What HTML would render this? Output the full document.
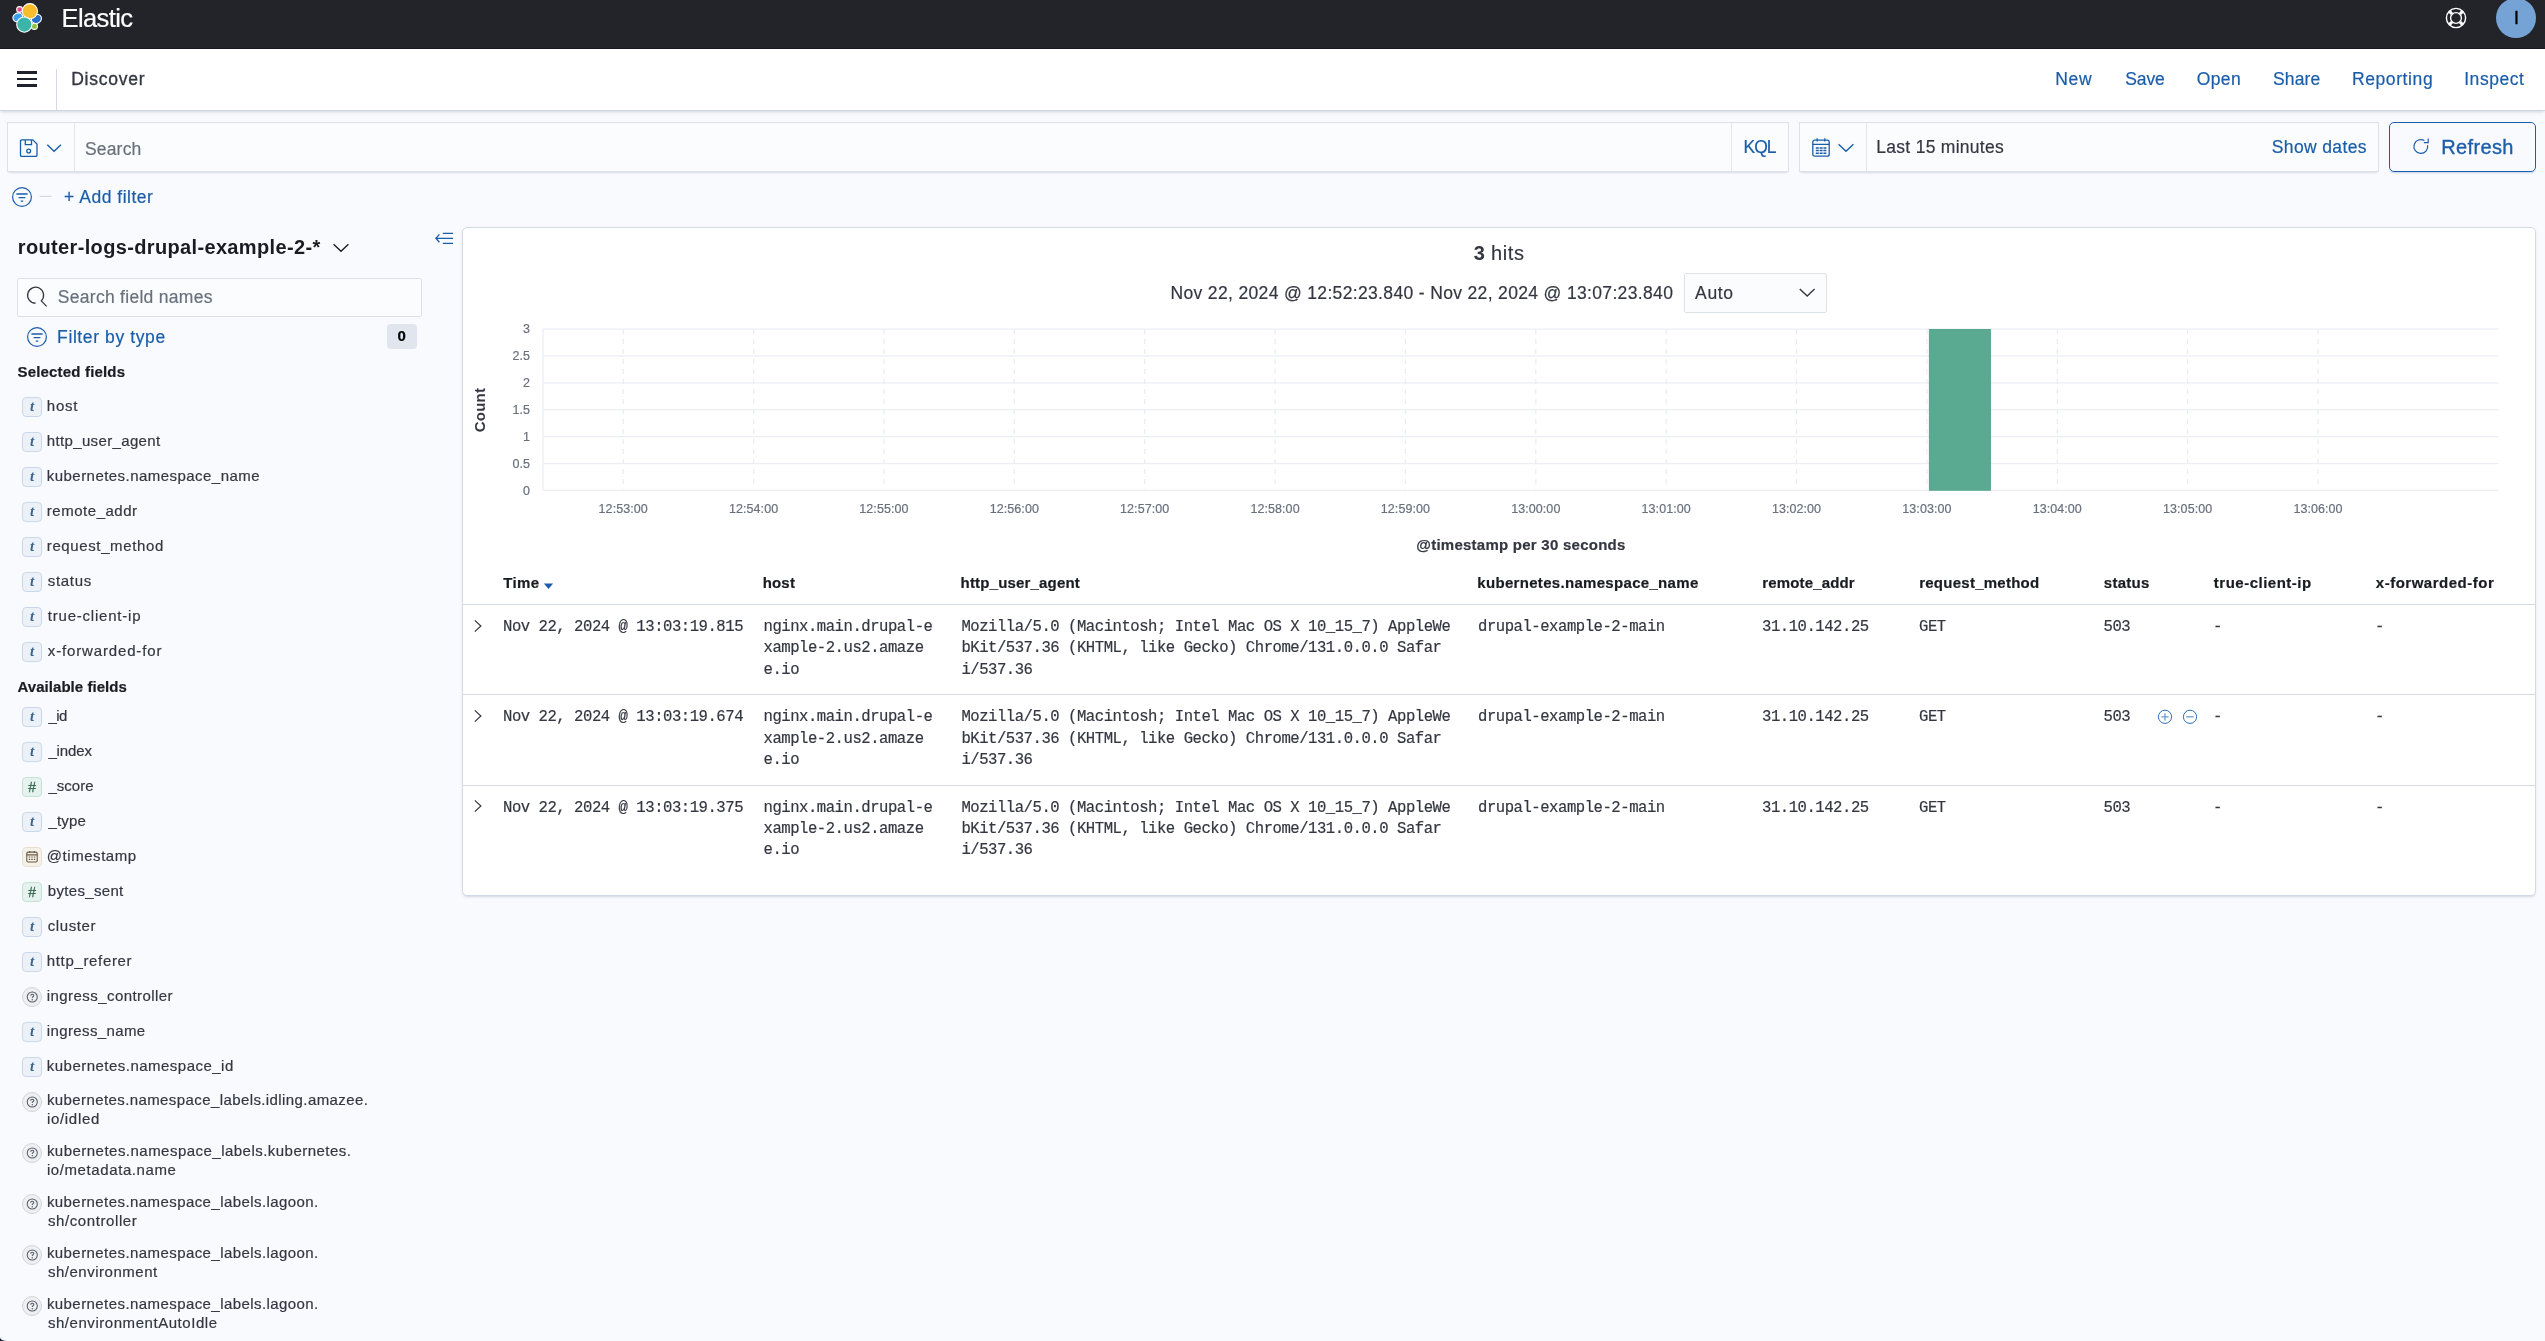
<!DOCTYPE html>
<html lang="en"><head><meta charset="utf-8"><title>Discover - Elastic</title>
<style>
*{box-sizing:border-box}
html,body{margin:0;padding:0}
body{width:2545px;height:1341px;overflow:hidden;background:#f9fafd;will-change:transform;font-family:"Liberation Sans", sans-serif;color:#343741;position:relative}
.abs{position:absolute}
.t{position:absolute;white-space:pre;line-height:1;font-family:"Liberation Sans", sans-serif;-webkit-text-stroke:.2px}
header,nav,aside,main,section{position:absolute;left:0;top:0;width:0;height:0}
.topbar{position:absolute;left:0;top:0;width:2545px;height:49px;background:#23242a;border-bottom:1px solid #18191e}
.navbar{position:absolute;left:0;top:49px;width:2545px;height:62px;background:#fff;border-bottom:1px solid #cdd4e3;box-shadow:0 2px 3px -1px rgba(152,162,179,.4)}
.box{position:absolute;background:#fbfcfd;border:1px solid #dde2ea;box-shadow:0 1px 1px -1px rgba(152,162,179,.3),0 3px 2px -2px rgba(152,162,179,.3)}
.vr{position:absolute;width:1px;background:#e3e7ee}
.tk{position:absolute;width:20px;height:20px;border-radius:4px;border:1px solid;display:flex;align-items:center;justify-content:center}
.tk i{font:italic 700 15px/1 "Liberation Serif", serif;display:block;margin-top:-1px}
.tk-t{background:#ecf1f8;border-color:#c9d8ea;color:#3b6491}
.tk-n{background:#e6f2ee;border-color:#c5e3d8;color:#3c6e58}
.tk-n i{font:italic 400 14px/1 "Liberation Sans", sans-serif;margin-top:0;-webkit-text-stroke:.35px}
.tk-d{background:#f5f1e9;border-color:#e9e1d0}
.tk-u{background:#eeeff1;border-color:#d0d3d9;border-radius:50%}
.row{position:absolute;left:0;width:0;height:0}
.c{position:absolute;top:0;white-space:pre;font:15.6px/21.4px "Liberation Mono", monospace;letter-spacing:-.468px;color:#343741;-webkit-text-stroke:.2px}
</style></head>
<body>

<header>
<div class="topbar"></div>
<svg class="abs" style="left:10px;top:0" width="36" height="36" viewBox="0 0 36 36">
<g stroke="#fff" stroke-width="1.1">
<circle cx="9.6" cy="9.5" r="2.9" fill="#e5478b"/>
<ellipse cx="7.8" cy="17.4" rx="5" ry="4.4" fill="#3a9ff0" transform="rotate(-25 7.8 17.4)"/>
<ellipse cx="26.4" cy="18.9" rx="5.2" ry="4.4" fill="#2470c8" transform="rotate(-25 26.4 18.9)"/>
<circle cx="24.4" cy="26.3" r="3.1" fill="#8fc43f"/>
<circle cx="19.9" cy="11.2" r="7.6" fill="#f8bd2a"/>
<circle cx="14.3" cy="24.6" r="7.6" fill="#3ab5a8"/>
</g></svg>
<svg class="abs" style="left:2444px;top:6px" width="24" height="24" viewBox="0 0 24 24">
<g fill="none" stroke="#fff">
<circle cx="12" cy="12" r="9.6" stroke-width="1.4"/>
<circle cx="12" cy="12" r="5.4" stroke-width="1.4"/>
<path d="M8 8 5.4 5.4M16 8l2.6-2.6M8 16l-2.6 2.6M16 16l2.6 2.6" stroke-width="3.1"/>
</g></svg>
<div class="abs" style="left:2496px;top:-2px;width:40px;height:40px;border-radius:50%;background:#76a3d6"></div>
<span class="t" style="left:61.60px;top:5.90px;font-size:25.5px;color:#fff;letter-spacing:-0.609px;">Elastic</span>
<span class="t" style="left:2513.90px;top:9.80px;font-size:17.5px;color:#000;-webkit-text-stroke:.4px #000;">I</span>
</header>
<nav>
<div class="navbar"></div>
<div class="abs" style="left:17px;top:71.3px;width:20.2px;height:2.6px;background:#1f212b"></div>
<div class="abs" style="left:17px;top:77.9px;width:20.2px;height:2.6px;background:#1f212b"></div>
<div class="abs" style="left:17px;top:84.1px;width:20.2px;height:2.6px;background:#1f212b"></div>
<div class="abs" style="left:56px;top:69px;width:1.2px;height:41px;background:#d3dae6"></div>
<span class="t" style="left:71.20px;top:70.90px;font-size:17.5px;letter-spacing:0.766px;-webkit-text-stroke:.35px #343741;">Discover</span>
<span class="t" style="left:2055.30px;top:71.20px;font-size:17.5px;color:#1a5daa;letter-spacing:0.665px;">New</span>
<span class="t" style="left:2125.30px;top:71.20px;font-size:17.5px;color:#1a5daa;letter-spacing:-0.152px;">Save</span>
<span class="t" style="left:2196.70px;top:71.20px;font-size:17.5px;color:#1a5daa;letter-spacing:0.408px;">Open</span>
<span class="t" style="left:2273.10px;top:71.20px;font-size:17.5px;color:#1a5daa;letter-spacing:0.084px;">Share</span>
<span class="t" style="left:2351.90px;top:71.20px;font-size:17.5px;color:#1a5daa;letter-spacing:0.607px;">Reporting</span>
<span class="t" style="left:2464.20px;top:71.20px;font-size:17.5px;color:#1a5daa;letter-spacing:0.557px;">Inspect</span>
</nav>
<section>
<div class="box" style="left:7px;top:122px;width:1782px;height:50px"></div>
<div class="vr" style="left:74px;top:123px;height:48px"></div>
<div class="vr" style="left:1730.5px;top:123px;height:48px"></div>
<svg class="abs" style="left:19px;top:138px" width="44" height="20" viewBox="0 0 44 20">
<g fill="none" stroke="#1a5daa" stroke-width="1.3">
<path d="M2.6 1.9h11.2l4.2 4.2v11.2a1.1 1.1 0 0 1-1.1 1.1H2.6a1.1 1.1 0 0 1-1.1-1.1V3a1.1 1.1 0 0 1 1.1-1.1z"/>
<path d="M6.3 1.9v4.7h6.2V1.9"/>
<circle cx="9.7" cy="13" r="1.9"/>
<path d="M28.3 6.7l6.8 6.6 6.8-6.6" stroke-width="1.4"/>
</g></svg>
<div class="box" style="left:1799px;top:122px;width:580px;height:50px"></div>
<div class="vr" style="left:1866px;top:123px;height:48px"></div>
<svg class="abs" style="left:1811px;top:137px" width="46" height="22" viewBox="0 0 46 22">
<g fill="none" stroke="#1a5daa" stroke-width="1.3">
<rect x="1.8" y="3.2" width="16.4" height="16" rx="2"/>
<path d="M1.8 7.4h16.4M6.2 1.2v3.4M13.8 1.2v3.4"/>
<path d="M4.8 11h3M8.6 11h3M12.4 11h3M4.8 13.6h3M8.6 13.6h3M12.4 13.6h3M4.8 16.2h3M8.6 16.2h3M12.4 16.2h3" stroke-width="1.5"/>
<path d="M27.6 7.2l7.4 7 7.4-7" stroke-width="1.4"/>
</g></svg>
<div class="abs" style="left:2389px;top:122px;width:147.4px;height:50px;border:1.2px solid #1a5daa;border-radius:5px;box-shadow:0 2px 2px -1px rgba(26,93,170,.25)"></div>
<svg class="abs" style="left:2411px;top:136px" width="20" height="20" viewBox="0 0 20 20">
<g fill="none" stroke="#1a5daa" stroke-width="1.2">
<path d="M16.6 9.2a6.9 6.9 0 1 1-3.2-4.6"/>
<path d="M17.2 2.4v4.2h-4.4"/>
</g></svg>
<svg class="abs" style="left:11px;top:186px" width="42" height="22" viewBox="0 0 42 22">
<g fill="none" stroke="#1a5daa" stroke-width="1.2">
<circle cx="11" cy="11" r="9.4"/>
<path d="M5.4 8h11.2M7.6 11.6h6.8M9.8 15.2h2.4" stroke-width="1.3"/>
</g>
<path d="M28.6 10.4h12" stroke="#d3dae6" stroke-width="1.2"/>
</svg>
<span class="t" style="left:84.90px;top:140.90px;font-size:17.5px;color:#69707d;letter-spacing:0.197px;">Search</span>
<span class="t" style="left:1743.60px;top:139.00px;font-size:17.5px;color:#1a5daa;letter-spacing:-1.092px;">KQL</span>
<span class="t" style="left:1876.30px;top:139.00px;font-size:17.5px;letter-spacing:0.279px;">Last 15 minutes</span>
<span class="t" style="left:2271.80px;top:139.00px;font-size:17.5px;color:#1a5daa;letter-spacing:0.367px;">Show dates</span>
<span class="t" style="left:2441.30px;top:137.00px;font-size:20px;color:#1a5daa;letter-spacing:0.349px;-webkit-text-stroke:.35px #1a5daa;">Refresh</span>
<span class="t" style="left:64.10px;top:189.00px;font-size:17.5px;color:#1a5daa;letter-spacing:0.508px;">+ Add filter</span>
</section>
<aside>
<svg class="abs" style="left:332px;top:241px" width="18" height="14" viewBox="0 0 18 14"><path d="M1.6 3.2l7.4 7 7.4-7" fill="none" stroke="#1a1c21" stroke-width="1.4"/></svg>
<svg class="abs" style="left:433px;top:230px" width="22" height="18" viewBox="0 0 22 18">
<g fill="none" stroke="#1a5daa" stroke-width="1.3">
<path d="M9.8 3.4H20M3.2 8.3H20M9.8 13.4H20M6.4 4.4 2.9 8.3l3.5 3.9"/>
</g></svg>
<div class="abs" style="left:17px;top:277.5px;width:404.5px;height:39px;background:#fbfcfd;border:1px solid #dde2ea;border-radius:2px;box-shadow:0 1px 1px -1px rgba(152,162,179,.2)"></div>
<svg class="abs" style="left:25px;top:285px" width="24" height="24" viewBox="0 0 24 24">
<path d="M10.6 18.2A8 8 0 1 1 16.26 15.86L21.6 21.4" fill="none" stroke="#343741" stroke-width="1.3"/></svg>
<svg class="abs" style="left:26px;top:326px" width="22" height="22" viewBox="0 0 22 22">
<g fill="none" stroke="#1a5daa" stroke-width="1.2">
<circle cx="11" cy="11" r="9.4"/>
<path d="M5.4 8h11.2M7.6 11.6h6.8M9.8 15.2h2.4" stroke-width="1.3"/>
</g></svg>
<div class="abs" style="left:387.3px;top:324.3px;width:29.5px;height:24.4px;background:#e0e5ee;border-radius:4px"></div>
<span class="tk tk-t" style="left:22px;top:397px"><i>t</i></span>
<span class="tk tk-t" style="left:22px;top:432px"><i>t</i></span>
<span class="tk tk-t" style="left:22px;top:467px"><i>t</i></span>
<span class="tk tk-t" style="left:22px;top:502px"><i>t</i></span>
<span class="tk tk-t" style="left:22px;top:537px"><i>t</i></span>
<span class="tk tk-t" style="left:22px;top:572px"><i>t</i></span>
<span class="tk tk-t" style="left:22px;top:607px"><i>t</i></span>
<span class="tk tk-t" style="left:22px;top:642px"><i>t</i></span>
<span class="tk tk-t" style="left:22px;top:707px"><i>t</i></span>
<span class="tk tk-t" style="left:22px;top:742px"><i>t</i></span>
<span class="tk tk-n" style="left:22px;top:777px"><i>#</i></span>
<span class="tk tk-t" style="left:22px;top:812px"><i>t</i></span>
<span class="tk tk-d" style="left:22px;top:847px"><svg viewBox="0 0 20 20" width="18" height="18"><rect x="4.2" y="4.6" width="11.6" height="11" rx="1.6" fill="none" stroke="#6a5b43" stroke-width="1.2"/><path d="M4.2 7.6h11.6M7.4 3.4v2M12.6 3.4v2" stroke="#6a5b43" stroke-width="1.2" fill="none"/><path d="M6.4 10h1.6M9.2 10h1.6M12 10h1.6M6.4 12.6h1.6M9.2 12.6h1.6M12 12.6h1.6" stroke="#6a5b43" stroke-width="1.3"/></svg></span>
<span class="tk tk-n" style="left:22px;top:882px"><i>#</i></span>
<span class="tk tk-t" style="left:22px;top:917px"><i>t</i></span>
<span class="tk tk-t" style="left:22px;top:952px"><i>t</i></span>
<span class="tk tk-u" style="left:22px;top:987px"><svg viewBox="0 0 20 20" width="18" height="18"><circle cx="10.3" cy="10" r="5.6" fill="none" stroke="#565c69" stroke-width="1.15"/><path d="M8.6 8.5c0-1 .8-1.6 1.7-1.6s1.7.6 1.7 1.5c0 1.2-1.7 1.3-1.7 2.6" fill="none" stroke="#565c69" stroke-width="1.25"/><circle cx="10.3" cy="13" r=".8" fill="#565c69"/></svg></span>
<span class="tk tk-t" style="left:22px;top:1022px"><i>t</i></span>
<span class="tk tk-t" style="left:22px;top:1057px"><i>t</i></span>
<span class="tk tk-u" style="left:22px;top:1092px"><svg viewBox="0 0 20 20" width="18" height="18"><circle cx="10.3" cy="10" r="5.6" fill="none" stroke="#565c69" stroke-width="1.15"/><path d="M8.6 8.5c0-1 .8-1.6 1.7-1.6s1.7.6 1.7 1.5c0 1.2-1.7 1.3-1.7 2.6" fill="none" stroke="#565c69" stroke-width="1.25"/><circle cx="10.3" cy="13" r=".8" fill="#565c69"/></svg></span>
<span class="tk tk-u" style="left:22px;top:1143px"><svg viewBox="0 0 20 20" width="18" height="18"><circle cx="10.3" cy="10" r="5.6" fill="none" stroke="#565c69" stroke-width="1.15"/><path d="M8.6 8.5c0-1 .8-1.6 1.7-1.6s1.7.6 1.7 1.5c0 1.2-1.7 1.3-1.7 2.6" fill="none" stroke="#565c69" stroke-width="1.25"/><circle cx="10.3" cy="13" r=".8" fill="#565c69"/></svg></span>
<span class="tk tk-u" style="left:22px;top:1194px"><svg viewBox="0 0 20 20" width="18" height="18"><circle cx="10.3" cy="10" r="5.6" fill="none" stroke="#565c69" stroke-width="1.15"/><path d="M8.6 8.5c0-1 .8-1.6 1.7-1.6s1.7.6 1.7 1.5c0 1.2-1.7 1.3-1.7 2.6" fill="none" stroke="#565c69" stroke-width="1.25"/><circle cx="10.3" cy="13" r=".8" fill="#565c69"/></svg></span>
<span class="tk tk-u" style="left:22px;top:1245px"><svg viewBox="0 0 20 20" width="18" height="18"><circle cx="10.3" cy="10" r="5.6" fill="none" stroke="#565c69" stroke-width="1.15"/><path d="M8.6 8.5c0-1 .8-1.6 1.7-1.6s1.7.6 1.7 1.5c0 1.2-1.7 1.3-1.7 2.6" fill="none" stroke="#565c69" stroke-width="1.25"/><circle cx="10.3" cy="13" r=".8" fill="#565c69"/></svg></span>
<span class="tk tk-u" style="left:22px;top:1296px"><svg viewBox="0 0 20 20" width="18" height="18"><circle cx="10.3" cy="10" r="5.6" fill="none" stroke="#565c69" stroke-width="1.15"/><path d="M8.6 8.5c0-1 .8-1.6 1.7-1.6s1.7.6 1.7 1.5c0 1.2-1.7 1.3-1.7 2.6" fill="none" stroke="#565c69" stroke-width="1.25"/><circle cx="10.3" cy="13" r=".8" fill="#565c69"/></svg></span>
<span class="t" style="left:17.80px;top:236.80px;font-size:20px;font-weight:700;-webkit-text-stroke:0;color:#1a1c21;letter-spacing:0.349px;">router-logs-drupal-example-2-*</span>
<span class="t" style="left:57.80px;top:289.00px;font-size:17.5px;color:#69707d;letter-spacing:0.285px;">Search field names</span>
<span class="t" style="left:57.10px;top:329.00px;font-size:17.5px;color:#1a5daa;letter-spacing:0.605px;">Filter by type</span>
<span class="t" style="left:397.40px;top:328.20px;font-size:15px;font-weight:700;-webkit-text-stroke:.2px;color:#000;">0</span>
<span class="t" style="left:17.50px;top:364.00px;font-size:15px;font-weight:700;-webkit-text-stroke:.2px;color:#1a1c21;letter-spacing:0.178px;">Selected fields</span>
<span class="t" style="left:17.50px;top:678.50px;font-size:15px;font-weight:700;-webkit-text-stroke:.2px;color:#1a1c21;letter-spacing:0.046px;">Available fields</span>
<span class="t" style="left:46.80px;top:397.60px;font-size:15px;letter-spacing:0.738px;">host</span>
<span class="t" style="left:46.80px;top:432.60px;font-size:15px;letter-spacing:0.353px;">http_user_agent</span>
<span class="t" style="left:46.80px;top:467.60px;font-size:15px;letter-spacing:0.456px;">kubernetes.namespace_name</span>
<span class="t" style="left:46.80px;top:502.60px;font-size:15px;letter-spacing:0.525px;">remote_addr</span>
<span class="t" style="left:46.80px;top:537.60px;font-size:15px;letter-spacing:0.618px;">request_method</span>
<span class="t" style="left:47.80px;top:572.60px;font-size:15px;letter-spacing:0.676px;">status</span>
<span class="t" style="left:47.80px;top:607.60px;font-size:15px;letter-spacing:0.786px;">true-client-ip</span>
<span class="t" style="left:47.80px;top:642.60px;font-size:15px;letter-spacing:0.850px;">x-forwarded-for</span>
<span class="t" style="left:48.40px;top:707.50px;font-size:15px;letter-spacing:-0.587px;">_id</span>
<span class="t" style="left:48.40px;top:742.50px;font-size:15px;letter-spacing:-0.120px;">_index</span>
<span class="t" style="left:48.40px;top:777.50px;font-size:15px;letter-spacing:0.024px;">_score</span>
<span class="t" style="left:48.40px;top:812.50px;font-size:15px;letter-spacing:0.162px;">_type</span>
<span class="t" style="left:46.80px;top:847.50px;font-size:15px;letter-spacing:0.548px;">@timestamp</span>
<span class="t" style="left:47.80px;top:882.50px;font-size:15px;letter-spacing:0.325px;">bytes_sent</span>
<span class="t" style="left:47.80px;top:917.50px;font-size:15px;letter-spacing:0.569px;">cluster</span>
<span class="t" style="left:46.80px;top:952.50px;font-size:15px;letter-spacing:0.659px;">http_referer</span>
<span class="t" style="left:46.80px;top:987.50px;font-size:15px;letter-spacing:0.436px;">ingress_controller</span>
<span class="t" style="left:46.80px;top:1022.50px;font-size:15px;letter-spacing:0.375px;">ingress_name</span>
<span class="t" style="left:46.80px;top:1057.50px;font-size:15px;letter-spacing:0.477px;">kubernetes.namespace_id</span>
<span class="t" style="left:46.90px;top:1092.40px;font-size:15px;letter-spacing:0.405px;">kubernetes.namespace_labels.idling.amazee.</span>
<span class="t" style="left:46.90px;top:1110.80px;font-size:15px;letter-spacing:0.701px;">io/idled</span>
<span class="t" style="left:46.90px;top:1143.40px;font-size:15px;letter-spacing:0.475px;">kubernetes.namespace_labels.kubernetes.</span>
<span class="t" style="left:46.90px;top:1161.80px;font-size:15px;letter-spacing:0.598px;">io/metadata.name</span>
<span class="t" style="left:46.90px;top:1194.40px;font-size:15px;letter-spacing:0.427px;">kubernetes.namespace_labels.lagoon.</span>
<span class="t" style="left:47.90px;top:1212.80px;font-size:15px;letter-spacing:0.599px;">sh/controller</span>
<span class="t" style="left:46.90px;top:1245.40px;font-size:15px;letter-spacing:0.427px;">kubernetes.namespace_labels.lagoon.</span>
<span class="t" style="left:47.90px;top:1263.80px;font-size:15px;letter-spacing:0.524px;">sh/environment</span>
<span class="t" style="left:46.90px;top:1296.40px;font-size:15px;letter-spacing:0.427px;">kubernetes.namespace_labels.lagoon.</span>
<span class="t" style="left:47.90px;top:1314.80px;font-size:15px;letter-spacing:0.550px;">sh/environmentAutoIdle</span>
</aside>
<main>
<div class="abs" style="left:462px;top:227px;width:2074px;height:669px;background:#fff;border:1px solid #d3dae6;border-radius:5px;box-shadow:0 2px 2px -1px rgba(152,162,179,.3),0 1px 5px -2px rgba(152,162,179,.3)"></div>
<div class="abs" style="left:1684.4px;top:273.4px;width:142.2px;height:39.2px;background:#fbfcfd;border:1px solid #dde2ea;border-radius:2px;box-shadow:0 1px 1px -1px rgba(152,162,179,.2)"></div>
<svg class="abs" style="left:1798px;top:286px" width="18" height="14" viewBox="0 0 18 14"><path d="M1.8 3l7.4 7 7.4-7" fill="none" stroke="#343741" stroke-width="1.4"/></svg>
<svg class="abs" style="left:0;top:0" width="2545" height="560" viewBox="0 0 2545 560"><line x1="623.2" y1="329.0" x2="623.2" y2="490.3" stroke="#eaecf1" stroke-width="1.25" stroke-dasharray="5 5"/><line x1="753.6" y1="329.0" x2="753.6" y2="490.3" stroke="#eaecf1" stroke-width="1.25" stroke-dasharray="5 5"/><line x1="883.9" y1="329.0" x2="883.9" y2="490.3" stroke="#eaecf1" stroke-width="1.25" stroke-dasharray="5 5"/><line x1="1014.3" y1="329.0" x2="1014.3" y2="490.3" stroke="#eaecf1" stroke-width="1.25" stroke-dasharray="5 5"/><line x1="1144.7" y1="329.0" x2="1144.7" y2="490.3" stroke="#eaecf1" stroke-width="1.25" stroke-dasharray="5 5"/><line x1="1275.1" y1="329.0" x2="1275.1" y2="490.3" stroke="#eaecf1" stroke-width="1.25" stroke-dasharray="5 5"/><line x1="1405.4" y1="329.0" x2="1405.4" y2="490.3" stroke="#eaecf1" stroke-width="1.25" stroke-dasharray="5 5"/><line x1="1535.8" y1="329.0" x2="1535.8" y2="490.3" stroke="#eaecf1" stroke-width="1.25" stroke-dasharray="5 5"/><line x1="1666.2" y1="329.0" x2="1666.2" y2="490.3" stroke="#eaecf1" stroke-width="1.25" stroke-dasharray="5 5"/><line x1="1796.5" y1="329.0" x2="1796.5" y2="490.3" stroke="#eaecf1" stroke-width="1.25" stroke-dasharray="5 5"/><line x1="1926.9" y1="329.0" x2="1926.9" y2="490.3" stroke="#eaecf1" stroke-width="1.25" stroke-dasharray="5 5"/><line x1="2057.3" y1="329.0" x2="2057.3" y2="490.3" stroke="#eaecf1" stroke-width="1.25" stroke-dasharray="5 5"/><line x1="2187.6" y1="329.0" x2="2187.6" y2="490.3" stroke="#eaecf1" stroke-width="1.25" stroke-dasharray="5 5"/><line x1="2318.0" y1="329.0" x2="2318.0" y2="490.3" stroke="#eaecf1" stroke-width="1.25" stroke-dasharray="5 5"/><line x1="543.0" y1="329.0" x2="2498.5" y2="329.0" stroke="#eceef3" stroke-width="1.25"/><line x1="543.0" y1="355.9" x2="2498.5" y2="355.9" stroke="#eceef3" stroke-width="1.25"/><line x1="543.0" y1="382.8" x2="2498.5" y2="382.8" stroke="#eceef3" stroke-width="1.25"/><line x1="543.0" y1="409.7" x2="2498.5" y2="409.7" stroke="#eceef3" stroke-width="1.25"/><line x1="543.0" y1="436.6" x2="2498.5" y2="436.6" stroke="#eceef3" stroke-width="1.25"/><line x1="543.0" y1="463.5" x2="2498.5" y2="463.5" stroke="#eceef3" stroke-width="1.25"/><line x1="543.0" y1="490.3" x2="2498.5" y2="490.3" stroke="#eceef3" stroke-width="1.25"/><line x1="543.0" y1="329.0" x2="543.0" y2="490.3" stroke="#eceef3" stroke-width="1.25"/><rect x="1929.4" y="329.5" width="61" height="160.7" fill="#5aaa91" stroke="#55a68c" stroke-width="1"/></svg>
<span class="t" style="left:478.8px;top:409.5px;font-size:15px;font-weight:700;-webkit-text-stroke:0;transform:translate(-50%,-50%) rotate(-90deg);letter-spacing:.25px">Count</span>
<span class="t" style="left:523.00px;top:323.30px;font-size:12.5px;color:#69707d;">3</span>
<span class="t" style="left:512.58px;top:350.20px;font-size:12.5px;color:#69707d;">2.5</span>
<span class="t" style="left:523.00px;top:377.10px;font-size:12.5px;color:#69707d;">2</span>
<span class="t" style="left:512.58px;top:404.00px;font-size:12.5px;color:#69707d;">1.5</span>
<span class="t" style="left:523.00px;top:430.90px;font-size:12.5px;color:#69707d;">1</span>
<span class="t" style="left:512.58px;top:457.80px;font-size:12.5px;color:#69707d;">0.5</span>
<span class="t" style="left:523.00px;top:484.60px;font-size:12.5px;color:#69707d;">0</span>
<span class="t" style="left:598.60px;top:502.60px;font-size:12.5px;color:#69707d;letter-spacing:0.071px;">12:53:00</span>
<span class="t" style="left:728.97px;top:502.60px;font-size:12.5px;color:#69707d;letter-spacing:0.071px;">12:54:00</span>
<span class="t" style="left:859.34px;top:502.60px;font-size:12.5px;color:#69707d;letter-spacing:0.071px;">12:55:00</span>
<span class="t" style="left:989.71px;top:502.60px;font-size:12.5px;color:#69707d;letter-spacing:0.071px;">12:56:00</span>
<span class="t" style="left:1120.08px;top:502.60px;font-size:12.5px;color:#69707d;letter-spacing:0.071px;">12:57:00</span>
<span class="t" style="left:1250.45px;top:502.60px;font-size:12.5px;color:#69707d;letter-spacing:0.071px;">12:58:00</span>
<span class="t" style="left:1380.82px;top:502.60px;font-size:12.5px;color:#69707d;letter-spacing:0.071px;">12:59:00</span>
<span class="t" style="left:1511.19px;top:502.60px;font-size:12.5px;color:#69707d;letter-spacing:0.071px;">13:00:00</span>
<span class="t" style="left:1641.56px;top:502.60px;font-size:12.5px;color:#69707d;letter-spacing:0.071px;">13:01:00</span>
<span class="t" style="left:1771.93px;top:502.60px;font-size:12.5px;color:#69707d;letter-spacing:0.071px;">13:02:00</span>
<span class="t" style="left:1902.30px;top:502.60px;font-size:12.5px;color:#69707d;letter-spacing:0.071px;">13:03:00</span>
<span class="t" style="left:2032.67px;top:502.60px;font-size:12.5px;color:#69707d;letter-spacing:0.071px;">13:04:00</span>
<span class="t" style="left:2163.04px;top:502.60px;font-size:12.5px;color:#69707d;letter-spacing:0.071px;">13:05:00</span>
<span class="t" style="left:2293.41px;top:502.60px;font-size:12.5px;color:#69707d;letter-spacing:0.071px;">13:06:00</span>
<span class="t" style="left:1473.70px;top:242.90px;font-size:20px;font-weight:700;-webkit-text-stroke:0;">3</span>
<span class="t" style="left:1490.90px;top:242.90px;font-size:20px;letter-spacing:0.659px;">hits</span>
<span class="t" style="left:1170.50px;top:285.30px;font-size:17.5px;letter-spacing:0.344px;">Nov 22, 2024 @ 12:52:23.840 - Nov 22, 2024 @ 13:07:23.840</span>
<span class="t" style="left:1695.10px;top:285.30px;font-size:17.5px;letter-spacing:0.611px;">Auto</span>
<span class="t" style="left:1416.30px;top:537.00px;font-size:15px;font-weight:700;-webkit-text-stroke:.2px;letter-spacing:0.250px;">@timestamp per 30 seconds</span>
<span class="t" style="left:503.20px;top:575.20px;font-size:15px;font-weight:700;-webkit-text-stroke:.2px;color:#1a1c21;letter-spacing:0.368px;">Time</span>
<span class="t" style="left:762.70px;top:575.20px;font-size:15px;font-weight:700;-webkit-text-stroke:.2px;color:#1a1c21;letter-spacing:0.178px;">host</span>
<span class="t" style="left:960.60px;top:575.20px;font-size:15px;font-weight:700;-webkit-text-stroke:.2px;color:#1a1c21;letter-spacing:0.179px;">http_user_agent</span>
<span class="t" style="left:1477.30px;top:575.20px;font-size:15px;font-weight:700;-webkit-text-stroke:.2px;color:#1a1c21;letter-spacing:0.312px;">kubernetes.namespace_name</span>
<span class="t" style="left:1762.30px;top:575.20px;font-size:15px;font-weight:700;-webkit-text-stroke:.2px;color:#1a1c21;letter-spacing:0.147px;">remote_addr</span>
<span class="t" style="left:1919.20px;top:575.20px;font-size:15px;font-weight:700;-webkit-text-stroke:.2px;color:#1a1c21;letter-spacing:0.252px;">request_method</span>
<span class="t" style="left:2103.80px;top:575.20px;font-size:15px;font-weight:700;-webkit-text-stroke:.2px;color:#1a1c21;letter-spacing:0.273px;">status</span>
<span class="t" style="left:2213.80px;top:575.20px;font-size:15px;font-weight:700;-webkit-text-stroke:.2px;color:#1a1c21;letter-spacing:0.502px;">true-client-ip</span>
<span class="t" style="left:2375.80px;top:575.20px;font-size:15px;font-weight:700;-webkit-text-stroke:.2px;color:#1a1c21;letter-spacing:0.507px;">x-forwarded-for</span>
<svg class="abs" style="left:543px;top:582px" width="12" height="8" viewBox="0 0 12 8"><path d="M.9 1.5h9.2L5.5 7z" fill="#1a5daa"/></svg>
<div class="abs" style="left:463px;top:604px;width:2072px;height:1px;background:#d3dae6"></div>
<div class="row" style="top:617.0px">
<svg class="abs" style="left:473px;top:1.8px" width="10" height="14" viewBox="0 0 10 14"><path d="M1.8 1.4 7.9 7 1.8 12.6" fill="none" stroke="#343741" stroke-width="1.2"/></svg>
<div class="c" style="left:503.0px">Nov 22, 2024 @ 13:03:19.815</div>
<div class="c" style="left:763.5px">nginx.main.drupal-e<br>xample-2.us2.amaze<br>e.io</div>
<div class="c" style="left:961.4px">Mozilla/5.0 (Macintosh; Intel Mac OS X 10_15_7) AppleWe<br>bKit/537.36 (KHTML, like Gecko) Chrome/131.0.0.0 Safar<br>i/537.36</div>
<div class="c" style="left:1478.0px">drupal-example-2-main</div>
<div class="c" style="left:1762.0px">31.10.142.25</div>
<div class="c" style="left:1919.0px">GET</div>
<div class="c" style="left:2103.6px">503</div>
<div class="c" style="left:2213.0px">-</div>
<div class="c" style="left:2375.0px">-</div>
</div>
<div class="row" style="top:707.2px">
<svg class="abs" style="left:473px;top:1.8px" width="10" height="14" viewBox="0 0 10 14"><path d="M1.8 1.4 7.9 7 1.8 12.6" fill="none" stroke="#343741" stroke-width="1.2"/></svg>
<div class="c" style="left:503.0px">Nov 22, 2024 @ 13:03:19.674</div>
<div class="c" style="left:763.5px">nginx.main.drupal-e<br>xample-2.us2.amaze<br>e.io</div>
<div class="c" style="left:961.4px">Mozilla/5.0 (Macintosh; Intel Mac OS X 10_15_7) AppleWe<br>bKit/537.36 (KHTML, like Gecko) Chrome/131.0.0.0 Safar<br>i/537.36</div>
<div class="c" style="left:1478.0px">drupal-example-2-main</div>
<div class="c" style="left:1762.0px">31.10.142.25</div>
<div class="c" style="left:1919.0px">GET</div>
<div class="c" style="left:2103.6px">503</div>
<div class="c" style="left:2213.0px">-</div>
<div class="c" style="left:2375.0px">-</div>
<svg class="abs" style="left:2157px;top:.4px" width="42" height="18" viewBox="0 0 42 18"><circle cx="8" cy="8.8" r="6.6" fill="none" stroke="#1a5daa" stroke-width=".9"/><path d="M4.4 8.8h7.2M8 5.2v7.2" stroke="#6f9bd0" stroke-width="1.3"/><circle cx="33" cy="8.8" r="6.6" fill="none" stroke="#1a5daa" stroke-width=".9"/><path d="M29.2 8.8h7.6" stroke="#6f9bd0" stroke-width="1.3"/></svg>
</div>
<div class="row" style="top:797.5px">
<svg class="abs" style="left:473px;top:1.8px" width="10" height="14" viewBox="0 0 10 14"><path d="M1.8 1.4 7.9 7 1.8 12.6" fill="none" stroke="#343741" stroke-width="1.2"/></svg>
<div class="c" style="left:503.0px">Nov 22, 2024 @ 13:03:19.375</div>
<div class="c" style="left:763.5px">nginx.main.drupal-e<br>xample-2.us2.amaze<br>e.io</div>
<div class="c" style="left:961.4px">Mozilla/5.0 (Macintosh; Intel Mac OS X 10_15_7) AppleWe<br>bKit/537.36 (KHTML, like Gecko) Chrome/131.0.0.0 Safar<br>i/537.36</div>
<div class="c" style="left:1478.0px">drupal-example-2-main</div>
<div class="c" style="left:1762.0px">31.10.142.25</div>
<div class="c" style="left:1919.0px">GET</div>
<div class="c" style="left:2103.6px">503</div>
<div class="c" style="left:2213.0px">-</div>
<div class="c" style="left:2375.0px">-</div>
</div>
<div class="abs" style="left:463px;top:694.0px;width:2072px;height:1px;background:#d3dae6"></div>
<div class="abs" style="left:463px;top:784.5px;width:2072px;height:1px;background:#d3dae6"></div>
</main>
<svg class="abs" style="left:0;top:1329px" width="12" height="12" viewBox="0 0 12 12"><path d="M0 8.2A7 3.8 0 0 0 7 12H0z" fill="#16203a"/></svg>

</body></html>
